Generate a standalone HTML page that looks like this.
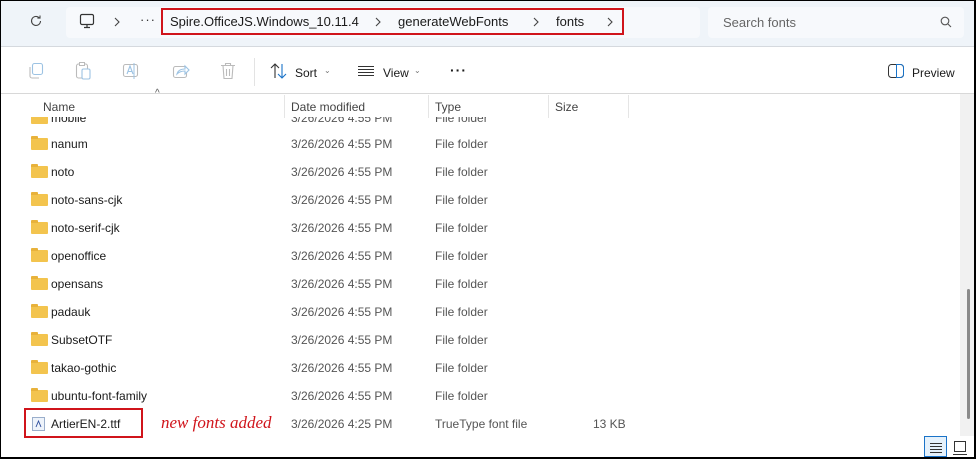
<!DOCTYPE html>
<html><head><meta charset="utf-8"><style>
*{margin:0;padding:0;box-sizing:border-box}
body{width:976px;height:459px;overflow:hidden;background:#fff;font-family:"Liberation Sans",sans-serif;font-size:12px;color:#1a1a1a;position:relative}
.frame{position:absolute;inset:0;border-top:1px solid #000;border-left:1px solid #000;border-right:2px solid #000;border-bottom:2px solid #000;z-index:10;pointer-events:none}
.top{position:absolute;left:0;top:0;width:976px;height:47px;background:#eff4f9;border-bottom:1px solid #d5d9de}
.addr{position:absolute;left:66px;top:7px;width:634px;height:31px;background:#f7f9fc;border-radius:4px}
.search{position:absolute;left:708px;top:7px;width:256px;height:31px;background:#f7f9fc;border-radius:4px;color:#666;font-size:13px;padding:8px 0 0 15px}
.t{position:absolute;white-space:nowrap}
.row{position:absolute;left:0;height:28px;width:960px}
.fold{position:absolute;left:31px;width:17px;height:12px;background:#f3c44e;border-radius:1px}
.fold:before{content:"";position:absolute;left:0;top:-2px;width:7px;height:3px;background:#e8b23b;border-radius:1px 1px 0 0}
.nm{position:absolute;left:51px;font-size:12px}
.dt{position:absolute;left:291px;color:#555}
.ty{position:absolute;left:435px;color:#555}
.sz{position:absolute;left:593px;color:#555}
.vsep{position:absolute;top:95px;height:23px;width:1px;background:#e5e5e5}
.chev{position:absolute}
</style></head><body>
<div class="top">
<svg class="t" style="left:29px;top:14px" width="14" height="14" viewBox="0 0 14 14"><path d="M11.5 7a4.5 4.5 0 1 1-1.4-3.3M11 1.5v2.6H8.4" fill="none" stroke="#444" stroke-width="1.1"/></svg>
<div class="addr"></div>
<svg class="t" style="left:79px;top:13px" width="16" height="16" viewBox="0 0 16 16"><rect x="1.5" y="1.5" width="13" height="10" rx="1.5" fill="none" stroke="#333" stroke-width="1.2"/><path d="M5 14.5h6M8 11.5v3" stroke="#333" stroke-width="1.2"/></svg>
<svg class="chev" style="left:114px;top:17px" width="6" height="10" viewBox="0 0 6 10"><path d="M1 1l4 4-4 4" fill="none" stroke="#444" stroke-width="1.1"/></svg>
<div class="t" style="left:140px;top:12px;color:#333;font-size:13px;letter-spacing:1px">···</div>
<div class="t" style="left:161px;top:8px;width:463px;height:27px;border:2px solid #d0141b"></div>
<div class="t" style="left:170px;top:14px;font-size:13px">Spire.OfficeJS.Windows_10.11.4</div>
<svg class="chev" style="left:375px;top:17px" width="6" height="10" viewBox="0 0 6 10"><path d="M1 1l4 4-4 4" fill="none" stroke="#444" stroke-width="1.1"/></svg>
<div class="t" style="left:398px;top:14px;font-size:13px">generateWebFonts</div>
<svg class="chev" style="left:533px;top:17px" width="6" height="10" viewBox="0 0 6 10"><path d="M1 1l4 4-4 4" fill="none" stroke="#444" stroke-width="1.1"/></svg>
<div class="t" style="left:556px;top:14px;font-size:13px">fonts</div>
<svg class="chev" style="left:607px;top:17px" width="6" height="10" viewBox="0 0 6 10"><path d="M1 1l4 4-4 4" fill="none" stroke="#444" stroke-width="1.1"/></svg>
<div class="search">Search fonts</div>
<svg class="t" style="left:940px;top:16px" width="12" height="12" viewBox="0 0 12 12"><circle cx="5" cy="5" r="3.8" fill="none" stroke="#555" stroke-width="1.1"/><path d="M8 8l3 3" stroke="#555" stroke-width="1.1"/></svg>
</div>
<!-- toolbar -->
<svg class="t" style="left:28px;top:62px" width="16" height="18" viewBox="0 0 16 18"><rect x="4.5" y="1.5" width="10" height="11" rx="2" fill="none" stroke="#9dc3e3" stroke-width="1.1"/><path d="M2 5v9a2 2 0 0 0 2 2h7" fill="none" stroke="#bbb" stroke-width="1.1"/></svg>
<svg class="t" style="left:75px;top:61px" width="16" height="19" viewBox="0 0 16 19"><rect x="1.5" y="3" width="11" height="14" rx="2" fill="none" stroke="#bbb" stroke-width="1.1"/><rect x="4.5" y="1.5" width="5" height="3" fill="#fff" stroke="#bbb"/><rect x="7" y="8" width="8" height="10" rx="1.5" fill="#fff" stroke="#9dc3e3" stroke-width="1.1"/></svg>
<svg class="t" style="left:122px;top:62px" width="18" height="18" viewBox="0 0 18 18"><rect x="1.5" y="2.5" width="14" height="12" rx="2" fill="none" stroke="#bbb" stroke-width="1.1"/><path d="M5 12l3-8 3 8M6 9.5h4" fill="none" stroke="#9dc3e3" stroke-width="1.1"/><path d="M12 1v16" stroke="#9dc3e3"/></svg>
<svg class="t" style="left:172px;top:62px" width="18" height="18" viewBox="0 0 18 18"><rect x="1.5" y="4.5" width="13" height="11" rx="2" fill="none" stroke="#bbb" stroke-width="1.1"/><path d="M5 12c1-4 4-5 8-5V4l4 4-4 4V9c-3 0-6 1-8 3z" fill="#fff" stroke="#9dc3e3" stroke-width="1.1"/></svg>
<svg class="t" style="left:220px;top:62px" width="16" height="18" viewBox="0 0 16 18"><path d="M1 3.5h14M5.5 3.5V1.5h5v2M3 3.5l1 13h8l1-13M6.5 7v7M9.5 7v7" fill="none" stroke="#bbb" stroke-width="1.1"/></svg>
<div class="t" style="left:254px;top:58px;width:1px;height:28px;background:#e3e3e3"></div>
<svg class="t" style="left:270px;top:63px" width="18" height="16" viewBox="0 0 18 16"><path d="M5 15V1M1 5l4-4 4 4" fill="none" stroke="#333" stroke-width="1.1"/><path d="M12 1v14M8 11l4 4 4-4" fill="none" stroke="#1a73c8" stroke-width="1.1"/></svg>
<div class="t" style="left:295px;top:66px">Sort</div>
<div class="t" style="left:324px;top:66px;font-size:8px;color:#777">⌄</div>
<svg class="t" style="left:358px;top:66px" width="16" height="10" viewBox="0 0 16 10"><path d="M0 .5h16M0 3.5h16M0 6.5h16M0 9.5h16" stroke="#333" stroke-width="1"/></svg>
<div class="t" style="left:383px;top:66px">View</div>
<div class="t" style="left:414px;top:66px;font-size:8px;color:#777">⌄</div>
<div class="t" style="left:450px;top:62px;font-size:14px;font-weight:bold;letter-spacing:1px">···</div>
<svg class="t" style="left:888px;top:64px" width="16" height="14" viewBox="0 0 16 14"><rect x=".5" y=".5" width="15" height="13" rx="3" fill="none" stroke="#333"/><path d="M8.5 .5h4a3 3 0 0 1 3 3v7a3 3 0 0 1-3 3h-4z" fill="none" stroke="#1a73c8"/></svg>
<div class="t" style="left:912px;top:66px">Preview</div>
<div class="t" style="left:0;top:93px;width:976px;height:1px;background:#d8d8d8"></div>
<!-- scrollbar -->
<div class="t" style="left:960px;top:94px;width:16px;height:342px;background:#f1f1f1"></div>
<div class="t" style="left:967px;top:289px;width:3px;height:130px;background:#8a8a8a;border-radius:2px"></div>
<!-- header -->
<div class="t" style="left:155px;top:88px;font-size:10px;color:#555">^</div>
<div class="t" style="left:43px;top:100px;color:#444">Name</div>
<div class="t" style="left:291px;top:100px;color:#444">Date modified</div>
<div class="t" style="left:435px;top:100px;color:#444">Type</div>
<div class="t" style="left:555px;top:100px;color:#444">Size</div>
<div class="vsep" style="left:284px"></div><div class="vsep" style="left:428px"></div><div class="vsep" style="left:548px"></div><div class="vsep" style="left:628px"></div>
<div style="position:absolute;left:0;top:117px;width:960px;height:20px;overflow:hidden">
<div class="row" style="top:-13px"><div class="fold" style="top:8px"></div><div class="nm t" style="top:7px">mobile</div><div class="dt t" style="top:7px">3/26/2026 4:55 PM</div><div class="ty t" style="top:7px">File folder</div></div>
</div>
<div class="row" style="top:130px"><div class="fold" style="top:8px"></div><div class="nm t" style="top:7px">nanum</div><div class="dt t" style="top:7px">3/26/2026 4:55 PM</div><div class="ty t" style="top:7px">File folder</div></div>
<div class="row" style="top:158px"><div class="fold" style="top:8px"></div><div class="nm t" style="top:7px">noto</div><div class="dt t" style="top:7px">3/26/2026 4:55 PM</div><div class="ty t" style="top:7px">File folder</div></div>
<div class="row" style="top:186px"><div class="fold" style="top:8px"></div><div class="nm t" style="top:7px">noto-sans-cjk</div><div class="dt t" style="top:7px">3/26/2026 4:55 PM</div><div class="ty t" style="top:7px">File folder</div></div>
<div class="row" style="top:214px"><div class="fold" style="top:8px"></div><div class="nm t" style="top:7px">noto-serif-cjk</div><div class="dt t" style="top:7px">3/26/2026 4:55 PM</div><div class="ty t" style="top:7px">File folder</div></div>
<div class="row" style="top:242px"><div class="fold" style="top:8px"></div><div class="nm t" style="top:7px">openoffice</div><div class="dt t" style="top:7px">3/26/2026 4:55 PM</div><div class="ty t" style="top:7px">File folder</div></div>
<div class="row" style="top:270px"><div class="fold" style="top:8px"></div><div class="nm t" style="top:7px">opensans</div><div class="dt t" style="top:7px">3/26/2026 4:55 PM</div><div class="ty t" style="top:7px">File folder</div></div>
<div class="row" style="top:298px"><div class="fold" style="top:8px"></div><div class="nm t" style="top:7px">padauk</div><div class="dt t" style="top:7px">3/26/2026 4:55 PM</div><div class="ty t" style="top:7px">File folder</div></div>
<div class="row" style="top:326px"><div class="fold" style="top:8px"></div><div class="nm t" style="top:7px">SubsetOTF</div><div class="dt t" style="top:7px">3/26/2026 4:55 PM</div><div class="ty t" style="top:7px">File folder</div></div>
<div class="row" style="top:354px"><div class="fold" style="top:8px"></div><div class="nm t" style="top:7px">takao-gothic</div><div class="dt t" style="top:7px">3/26/2026 4:55 PM</div><div class="ty t" style="top:7px">File folder</div></div>
<div class="row" style="top:382px"><div class="fold" style="top:8px"></div><div class="nm t" style="top:7px">ubuntu-font-family</div><div class="dt t" style="top:7px">3/26/2026 4:55 PM</div><div class="ty t" style="top:7px">File folder</div></div>
<div class="row" style="top:410px">
<svg class="t" style="left:32px;top:7px" width="13" height="14" viewBox="0 0 13 14"><rect x=".5" y=".5" width="12" height="13" fill="#eef3fa" stroke="#9aaecb"/><path d="M4 10l2.5-6 2.5 6" fill="none" stroke="#2a4a9a" stroke-width=".9"/></svg>
<div class="nm t" style="top:7px">ArtierEN-2.ttf</div><div class="dt t" style="top:7px">3/26/2026 4:25 PM</div><div class="ty t" style="top:7px">TrueType font file</div><div class="sz t" style="top:7px">13 KB</div></div>
<div class="t" style="left:24px;top:408px;width:119px;height:30px;border:2px solid #d0141b"></div>
<div class="t" style="left:161px;top:413px;color:#d0141b;font-family:'Liberation Serif',serif;font-style:italic;font-size:17px">new fonts added</div>
<div class="t" style="left:924px;top:436px;width:23px;height:21px;border:1px solid #1a73c8;background:#e5f1fb"></div>
<svg class="t" style="left:930px;top:442px" width="12" height="12" viewBox="0 0 12 12"><path d="M0 1.5h12M0 4.5h12M0 7.5h12M0 10.5h12" stroke="#333"/></svg>
<svg class="t" style="left:953px;top:441px" width="14" height="14" viewBox="0 0 14 14"><rect x="1.5" y=".5" width="11" height="10" fill="none" stroke="#333"/><path d="M0 13.5h14" stroke="#333"/></svg>
<div class="frame"></div>
</body></html>
